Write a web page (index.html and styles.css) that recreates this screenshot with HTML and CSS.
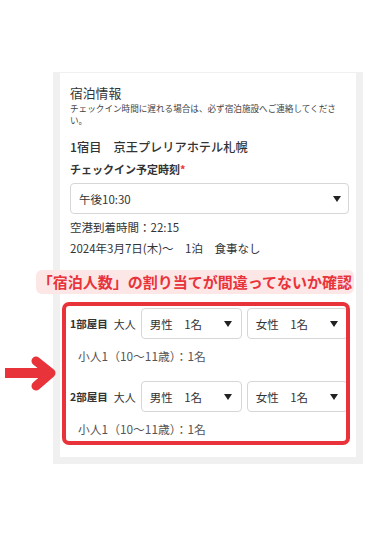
FILE: index.html
```html
<!DOCTYPE html>
<html lang="ja">
<head>
<meta charset="UTF-8">
<title>宿泊情報</title>
<link rel="stylesheet" href="styles.css">
</head>
<body>
<div class="page">

    <!-- 宿泊情報カード -->
    <div class="frame">
        <div class="card">
            <div class="title">宿泊情報</div>
            <div class="note">チェックイン時間に遅れる場合は、必ず宿泊施設へご連絡してください。</div>
            <div class="hotel">1宿目　京王プレリアホテル札幌</div>
            <div class="label">チェックイン予定時刻<span class="req">*</span></div>
            <div class="select select-wide">
                <span>午後10:30</span>
                <span class="caret"></span>
            </div>
            <div class="info info-first">空港到着時間：22:15</div>
            <div class="info">2024年3月7日(木)〜　1泊　食事なし</div>

            <div class="rooms">
                <div class="room-row">
                    <span class="room-name">1部屋目</span>
                    <span class="room-adult">大人</span>
                    <div class="select select-small">
                        <span>男性　1名</span>
                        <span class="caret"></span>
                    </div>
                    <div class="select select-small">
                        <span>女性　1名</span>
                        <span class="caret"></span>
                    </div>
                </div>
                <div class="child">小人1（10〜11歳）：1名</div>

                <div class="room-row">
                    <span class="room-name">2部屋目</span>
                    <span class="room-adult">大人</span>
                    <div class="select select-small">
                        <span>男性　1名</span>
                        <span class="caret"></span>
                    </div>
                    <div class="select select-small">
                        <span>女性　1名</span>
                        <span class="caret"></span>
                    </div>
                </div>
                <div class="child">小人1（10〜11歳）：1名</div>
            </div>
        </div>
    </div>

    <!-- 注釈 -->
    <div class="banner">「宿泊人数」の割り当てが間違ってないか確認</div>
    <svg class="arrow" width="60" height="40" viewBox="0 0 60 40">
        <line x1="5" y1="18" x2="46" y2="18" stroke="#e8333a" stroke-width="10"/>
        <polyline points="36,6 51,18 36,31" fill="none" stroke="#e8333a" stroke-width="9" stroke-linecap="round" stroke-linejoin="round"/>
    </svg>
</div>
</body>
</html>
```

FILE: styles.css
```css
/* base */
html, body {
    margin: 0;
    padding: 0;
    background: #fff;
    color: #333;
    font-family: "Noto Sans CJK JP", "Noto Sans", sans-serif;
}

.page {
    position: relative;
    width: 390px;
    height: 550px;
    padding-top: 72px;
    box-sizing: border-box;
}

/* gray frame round the card */
.frame {
    margin-left: 53px;
    width: 310px;
    padding: 1px 7px 7px 7px;
    box-sizing: border-box;
    background: #f0f0f0;
}

.card {
    background: #fff;
    padding: 11px 7px 12px 10px;
}

.title {
    font-size: 12.8px;
    line-height: 18px;
}

.note {
    font-size: 8.6px;
    line-height: 12px;
    color: #444;
}

.hotel {
    margin-top: 11px;
    font-size: 12.2px;
    line-height: 20px;
    font-weight: 500;
}

.label {
    margin-top: 4px;
    font-size: 11px;
    line-height: 16px;
    font-weight: 700;
}

.req {
    color: #e8333a;
}

/* select boxes */
.select {
    display: flex;
    align-items: center;
    justify-content: space-between;
    height: 31px;
    box-sizing: border-box;
    border: 1px solid #d6d6d6;
    border-radius: 4px;
    background: #fff;
    font-size: 11.5px;
    color: #333;
}

.select-wide {
    margin-top: 6px;
    padding: 0 7px 0 8px;
}

.caret {
    width: 0;
    height: 0;
    border-left: 4px solid transparent;
    border-right: 4px solid transparent;
    border-top: 6px solid #222;
}

.info {
    font-size: 11.5px;
    line-height: 21px;
}

.info-first {
    margin-top: 3px;
}

/* room allocation (red box) */
.rooms {
    margin: 43px -1px 0 -8px;
    padding: 2px 0 2px 4px;
    border: 4px solid #e8333a;
    border-radius: 7px;
    overflow: hidden;
}

.room-row {
    display: flex;
    align-items: center;
    height: 31px;
    white-space: nowrap;
}

.room-name {
    font-size: 10.5px;
    font-weight: 700;
}

.room-adult {
    margin-left: 6px;
    margin-right: 5px;
    font-size: 11px;
}

.select-small {
    flex: none;
    width: 101px;
    padding: 0 9px 0 8px;
    margin-right: 5px;
}

.child {
    margin: 7px 0 15px 8px;
    font-size: 11.8px;
    line-height: 20px;
    color: #555;
}

.child:last-child {
    margin-bottom: 0;
}

/* annotations */
.banner {
    position: absolute;
    top: 270px;
    left: 36px;
    width: 318px;
    height: 24px;
    border-radius: 6px;
    background: #fde6e6;
    color: #e8333a;
    font-size: 15px;
    font-weight: 700;
    line-height: 24px;
    text-align: center;
    white-space: nowrap;
}

.arrow {
    position: absolute;
    top: 355px;
    left: 0;
}
```
